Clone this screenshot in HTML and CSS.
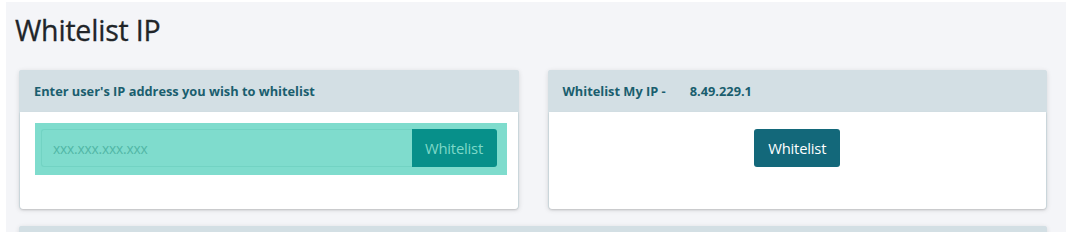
FILE: index.html
```html
<!DOCTYPE html>
<html>
<head>
<meta charset="utf-8">
<link rel="stylesheet" href="styles.css">
</head>
<body>
<div class="page">
  <h1 class="title">Whitelist IP</h1>
  <div class="row">
    <div class="card">
      <div class="card-header">Enter user's IP address you wish to whitelist</div>
      <div class="card-body">
        <div class="highlight">
          <div class="input-group">
            <input class="ip-input" type="text" placeholder="xxx.xxx.xxx.xxx">
            <button class="btn btn-faded">Whitelist</button>
          </div>
        </div>
      </div>
    </div>
    <div class="card">
      <div class="card-header">Whitelist My IP - <span class="ip">8.49.229.1</span></div>
      <div class="card-body center">
        <button class="btn btn-primary">Whitelist</button>
      </div>
    </div>
  </div>
  <div class="card wide">
    <div class="card-header"></div>
  </div>
</div>
</body>
</html>
```
FILE: styles.css
```css
html, body {
  margin: 0;
  padding: 0;
  background: #ffffff;
}
body {
  font-family: "Open Sans", "Noto Sans", sans-serif;
  color: #212529;
}
.page {
  margin: 2px 4px 0 6px;
  background: #f4f5f8;
  padding: 10px 19px 0 13px;
  height: 230px;
  box-sizing: border-box;
  overflow: hidden;
}
.title {
  margin: 0 0 0 -4px;
  font-size: 28.5px;
  font-weight: 400;
  -webkit-text-stroke: 0.3px #212529;
  line-height: 36px;
  letter-spacing: -0.2px;
  color: #212529;
}
.row {
  display: flex;
  gap: 29px;
  margin-top: 22px;
}
.card {
  flex: 1;
  box-shadow: 0 1px 5px rgba(0, 0, 0, 0.12);
  border-radius: 3px;
  background: #d3dfe4;
}
.card-header {
  height: 42px;
  display: flex;
  align-items: center;
  padding: 0 15px;
  font-size: 12.8px;
  font-weight: 700;
  color: #1a5e6e;
  background: #d3dfe4;
  border-radius: 3px 3px 0 0;
}
.ip {
  margin-left: 24px;
}
.card-body {
  background: #ffffff;
  height: 97px;
  margin: 0 1px;
  border-radius: 0 0 3px 3px;
  box-shadow: 0 1px 2px rgba(0, 0, 0, 0.15);
  box-sizing: border-box;
  padding: 11px 11px 0 15px;
}
.center {
  display: flex;
  justify-content: center;
  padding: 17px 0 0 0;
}
.highlight {
  background: #7fdccd;
  padding: 6px 10px 8px 6px;
}
.input-group {
  display: flex;
  height: 38px;
}
.ip-input {
  flex: 1;
  min-width: 0;
  height: 38px;
  box-sizing: border-box;
  border: 1px solid #72d3c3;
  border-right: none;
  border-radius: 3px 0 0 3px;
  background: #7fdccd;
  padding: 0 11px;
  font-family: "Open Sans", sans-serif;
  font-size: 13.8px;
  outline: none;
}
.ip-input::placeholder {
  color: #52b7a6;
  letter-spacing: -0.2px;
}
.btn {
  height: 38px;
  border: none;
  font-family: "Open Sans", sans-serif;
  font-size: 14.8px;
  padding: 0 12px;
  letter-spacing: -0.2px;
}
.btn-faded {
  width: 85px;
  background: #07908a;
  color: #7ed8c8;
  border-radius: 0 3px 3px 0;
}
.btn-primary {
  width: 86px;
  background: #13687a;
  color: #ffffff;
  border-radius: 3px;
}
.wide {
  margin-top: 17px;
  height: 40px;
}
```
